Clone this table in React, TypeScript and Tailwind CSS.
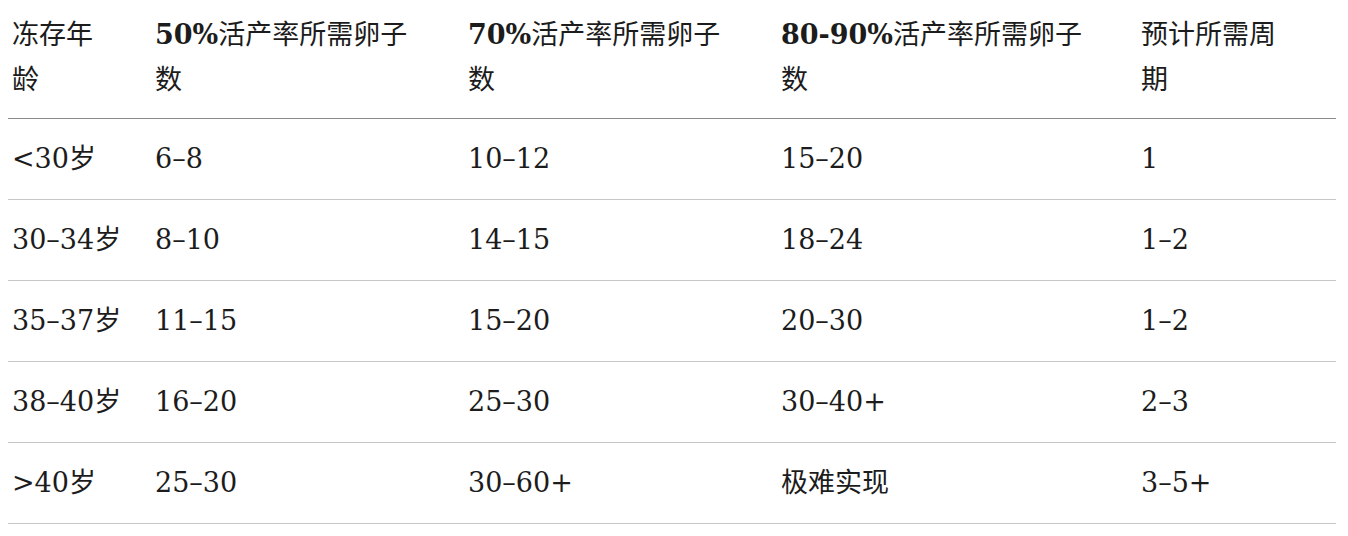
const headers: { bold: string; rest: string; tail: string }[] = [
  { bold: '', rest: '冻存年', tail: '龄' },
  { bold: '50%', rest: '活产率所需卵子', tail: '数' },
  { bold: '70%', rest: '活产率所需卵子', tail: '数' },
  { bold: '80-90%', rest: '活产率所需卵子', tail: '数' },
  { bold: '', rest: '预计所需周', tail: '期' },
]

const rows = [
  ['<30岁', '6–8', '10–12', '15–20', '1'],
  ['30–34岁', '8–10', '14–15', '18–24', '1–2'],
  ['35–37岁', '11–15', '15–20', '20–30', '1–2'],
  ['38–40岁', '16–20', '25–30', '30–40+', '2–3'],
  ['>40岁', '25–30', '30–60+', '极难实现', '3–5+'],
]

export default function App() {
  return (
    <div
      className="bg-white pl-2 pr-3 text-[27px] text-[#1c1c1c]"
      style={{ fontFamily: '"DejaVu Serif", "Noto Sans CJK SC", serif' }}
    >
      <table className="w-[1328px] table-fixed border-collapse">
        <colgroup>
          <col className="w-[143px]" />
          <col className="w-[313px]" />
          <col className="w-[313px]" />
          <col className="w-[360px]" />
          <col className="w-[199px]" />
        </colgroup>
        <thead>
          <tr className="border-b border-[#8a8a8a]">
            {headers.map((h, i) => (
              <th key={i} className="px-1 pt-[12px] pb-[16px] text-left align-top font-normal leading-[45px]">
                {h.bold && <span className="font-bold">{h.bold}</span>}
                {h.rest}
                <br />
                {h.tail}
              </th>
            ))}
          </tr>
        </thead>
        <tbody>
          {rows.map((r, i) => (
            <tr key={i} className="border-b border-[#c6c6c6]">
              {r.map((c, j) => (
                <td key={j} className="px-1 py-[17px] leading-[46px]">
                  {c}
                </td>
              ))}
            </tr>
          ))}
        </tbody>
      </table>
    </div>
  )
}
